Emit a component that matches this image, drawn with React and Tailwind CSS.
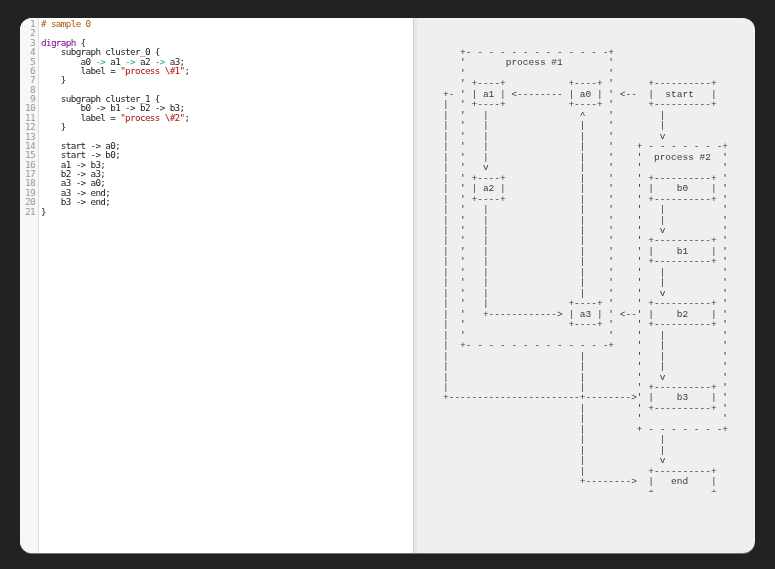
import React from "react";

const W = 50;
const H = 43;

// builds the graph-easy style ascii drawing row by row
function buildDiagram() {
  const g = Array.from({ length: H }, () => Array(W).fill(" "));
  const put = (r, c, s) => {
    for (let i = 0; i < s.length; i++) g[r][c + i] = s[i];
  };
  const vline = (c, from, to, ch = "|") => {
    for (let r = from; r <= to; r++) g[r][c] = ch;
  };
  const box = (r, c, label) => {
    const edge = "+" + "-".repeat(label.length - 2) + "+";
    put(r, c, edge);
    put(r + 1, c, label);
    put(r + 2, c, edge);
  };

  // cluster 0
  put(0, 3, "+" + "- ".repeat(12) + "-+");
  put(28, 3, "+" + "- ".repeat(12) + "-+");
  vline(3, 1, 27, "'");
  vline(29, 1, 27, "'");
  put(1, 11, "process #1");

  // cluster 1
  put(9, 34, "+" + " -".repeat(7) + "+");
  put(36, 34, "+" + " -".repeat(7) + "+");
  vline(34, 10, 35, "'");
  vline(49, 10, 35, "'");
  put(10, 37, "process #2");

  box(3, 5, "| a1 |");
  box(3, 22, "| a0 |");
  box(3, 36, "|  start   |");
  box(12, 5, "| a2 |");
  box(12, 36, "|    b0    |");
  box(18, 36, "|    b1    |");
  box(24, 22, "| a3 |");
  box(24, 36, "|    b2    |");
  box(32, 36, "|    b3    |");
  box(40, 36, "|   end    |");

  // edges
  put(4, 0, "+-");
  put(4, 12, "<--------");
  put(4, 31, "<--");
  vline(0, 5, 32);
  put(33, 0, "+" + "-".repeat(23) + "+" + "-".repeat(8) + ">");

  vline(7, 6, 10);
  g[11][7] = "v";
  vline(7, 15, 24);
  put(25, 7, "+" + "-".repeat(12) + ">");

  g[6][24] = "^";
  vline(24, 7, 23);
  vline(24, 29, 32);
  vline(24, 34, 40);
  put(41, 24, "+" + "-".repeat(8) + ">");
  put(25, 31, "<--");

  [[6, 7, 8], [15, 16, 17], [21, 22, 23], [27, 30, 31], [37, 38, 39]].forEach(
    ([a, b, v]) => {
      vline(38, a, b);
      g[v][38] = "v";
    }
  );

  return g.map((row) => row.join("").replace(/\s+$/, "")).join("\n");
}

const diagram = buildDiagram();

const K = ({ c, children }) => <span className={c}>{children}</span>;
const cmt = "text-[#aa5500]";
const kw = "text-[#770088]";
const str = "text-[#aa1111]";
const op = "text-[#22998a]";

const codeLines = [
  <K c={cmt}># sample 0</K>,
  "",
  <>
    <K c={kw}>digraph</K> {"{"}
  </>,
  "    subgraph cluster_0 {",
  <>
    {"        a0 "}
    <K c={op}>-&gt;</K>
    {" a1 "}
    <K c={op}>-&gt;</K>
    {" a2 "}
    <K c={op}>-&gt;</K>
    {" a3;"}
  </>,
  <>
    {"        label = "}
    <K c={str}>"process \#1"</K>;
  </>,
  "    }",
  "",
  "    subgraph cluster_1 {",
  "        b0 -> b1 -> b2 -> b3;",
  <>
    {"        label = "}
    <K c={str}>"process \#2"</K>;
  </>,
  "    }",
  "",
  "    start -> a0;",
  "    start -> b0;",
  "    a1 -> b3;",
  "    b2 -> a3;",
  "    a3 -> a0;",
  "    a3 -> end;",
  "    b3 -> end;",
  "}",
];

function Editor() {
  return (
    <div className="flex h-full w-[393px] shrink-0 bg-white font-['DejaVu_Sans_Mono',monospace] text-[9.3px] leading-[9.375px] tracking-[-0.65px] text-[#1a1a1a]">
      <div className="h-full w-[19px] shrink-0 border-r border-[#dddddd] bg-[#f7f7f7] pt-[1px] pr-[3px] text-right text-[#999999]">
        {codeLines.map((_, i) => (
          <div key={i}>{i + 1}</div>
        ))}
      </div>
      <div className="pt-[1px] pl-[2px] whitespace-pre [will-change:transform]">
        {codeLines.map((line, i) => (
          <div key={i}>{line === "" ? " " : line}</div>
        ))}
      </div>
    </div>
  );
}

function Preview() {
  return (
    <div className="flex flex-1 justify-center bg-[#efefef] pt-[30px]">
      <div className="h-[444px] overflow-hidden">
        <pre className="font-['Liberation_Mono',monospace] text-[9.5px] leading-[10.475px] text-[#3a3a3a] [will-change:transform]">
          {diagram}
        </pre>
      </div>
    </div>
  );
}

export default function App() {
  return (
    <div className="h-[569px] w-[775px] bg-[#222222] px-[20px] pt-[18px] antialiased">
      <div className="flex h-[535px] w-[735px] overflow-hidden rounded-[12px] shadow-[0_1px_0_#777]">
        <Editor />
        <div className="w-px shrink-0 bg-[#cfcfcf]" />
        <div className="w-[3px] shrink-0 bg-[#e6e6e6]" />
        <Preview />
      </div>
    </div>
  );
}
